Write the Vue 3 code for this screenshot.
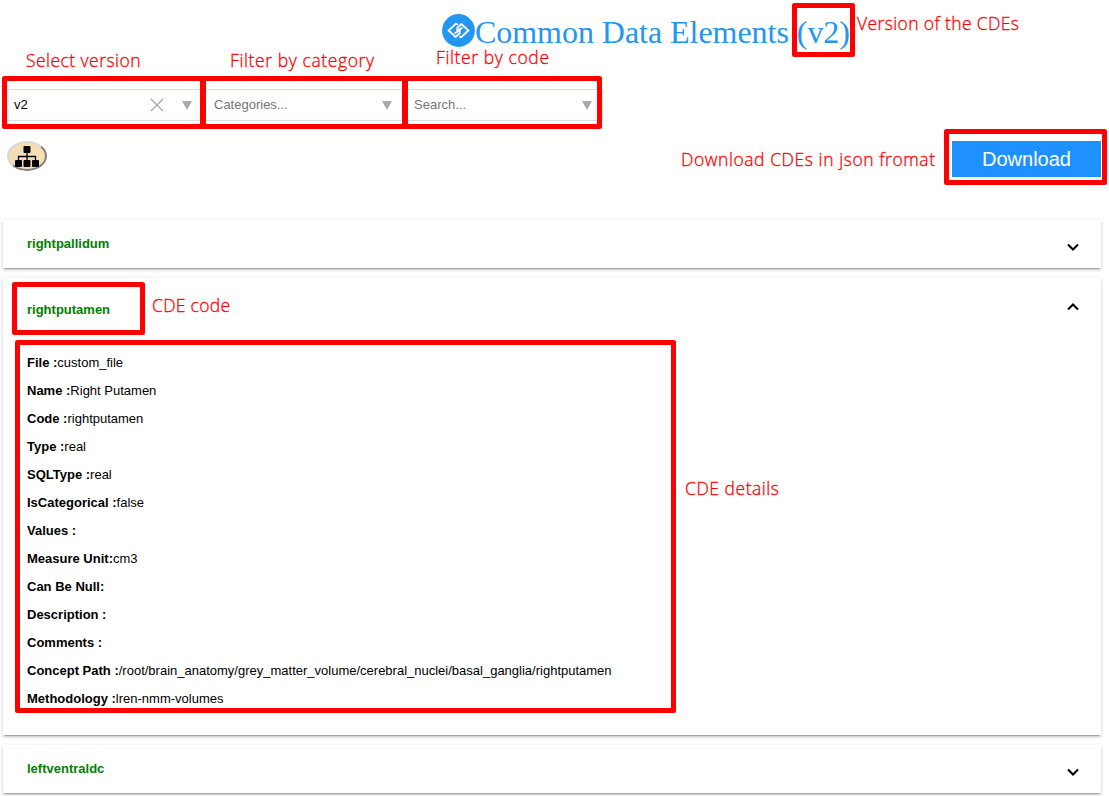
<script setup>
const filters = [
  { text: 'v2', filled: true },
  { text: 'Categories...', filled: false },
  { text: 'Search...', filled: false },
]

const details = [
  ['File :', 'custom_file'],
  ['Name :', 'Right Putamen'],
  ['Code :', 'rightputamen'],
  ['Type :', 'real'],
  ['SQLType :', 'real'],
  ['IsCategorical :', 'false'],
  ['Values :', ''],
  ['Measure Unit:', 'cm3'],
  ['Can Be Null:', ''],
  ['Description :', ''],
  ['Comments :', ''],
  ['Concept Path :', '/root/brain_anatomy/grey_matter_volume/cerebral_nuclei/basal_ganglia/rightputamen'],
  ['Methodology :', 'lren-nmm-volumes'],
]

const panels = [
  { code: 'rightpallidum', open: false },
  { code: 'rightputamen', open: true },
  { code: 'leftventraldc', open: false },
]

// Outer edges of each highlight frame
const frames = [
  { x: 2, y: 76, w: 204, h: 53 },
  { x: 200, y: 76, w: 208, h: 53 },
  { x: 402, y: 76, w: 200, h: 53 },
  { x: 792, y: 3, w: 63, h: 54 },
  { x: 944, y: 129, w: 163, h: 56 },
  { x: 12, y: 282, w: 133, h: 53 },
  { x: 15, y: 340, w: 661, h: 373 },
]

const notes = [
  { text: 'Select version', x: 26, y: 67, w: 114.5 },
  { text: 'Filter by category', x: 230, y: 67, w: 144 },
  { text: 'Filter by code', x: 436, y: 64, w: 113 },
  { text: 'Version of the CDEs', x: 857, y: 30, w: 162 },
  { text: 'Download CDEs in json fromat', x: 681, y: 166, w: 254 },
  { text: 'CDE code', x: 152, y: 312, w: 78 },
  { text: 'CDE details', x: 685, y: 495, w: 94 },
]
</script>

<template>
  <main class="page">
    <header class="title">
      <svg class="logo" viewBox="0 0 32 32" width="33" height="33">
        <circle cx="16" cy="16" r="15.9" fill="#2196f3" />
        <g fill="none" stroke="#fff" stroke-width="1.8">
          <path d="M15.4 10.2 L13.4 9.6 L6.4 16 L13.2 22.2 L17.2 18.6 V15.4 L12.2 19" />
          <path d="M16.6 21.8 L18.6 22.4 L25.6 16 L18.8 9.8 L14.8 13.4 V16.6 L19.8 13" />
        </g>
      </svg>
      <h1>Common Data Elements (v2)</h1>
    </header>

    <section class="filters">
      <div v-for="f in filters" :key="f.text" class="select" :class="{ filled: f.filled }">
        <span class="value">{{ f.text }}</span>
        <svg v-if="f.filled" class="clear" width="14" height="14" viewBox="0 0 14 14">
          <path d="M1 1 L13 13 M13 1 L1 13" stroke="#aaa" stroke-width="1.4" />
        </svg>
        <svg class="arrow" width="10" height="9" viewBox="0 0 10 9">
          <path d="M0 0 H10 L5 9 Z" fill="#aaa" />
        </svg>
      </div>
    </section>

    <section class="actions">
      <button class="tree" type="button" aria-label="Tree view">
        <svg width="24" height="21" viewBox="0 0 24 21">
          <rect x="8.5" y="0" width="7" height="7" rx="1" />
          <rect x="0" y="14" width="7" height="7" rx="1" />
          <rect x="8.5" y="14" width="7" height="7" rx="1" />
          <rect x="17" y="14" width="7" height="7" rx="1" />
          <path d="M12 6 V15 M3.5 15 V10.5 H20.5 V15" fill="none" stroke="#000" stroke-width="1.3" />
        </svg>
      </button>
      <button class="download" type="button">Download</button>
    </section>

    <section class="panels">
      <article v-for="p in panels" :key="p.code" class="panel" :class="{ open: p.open }">
        <div class="head">
          <b>{{ p.code }}</b>
          <svg class="chevron" width="12" height="8" viewBox="0 0 12 8">
            <path :d="p.open ? 'M1 6.5 L6 1.5 L11 6.5' : 'M1 1.5 L6 6.5 L11 1.5'" fill="none" stroke="#000" stroke-width="2" />
          </svg>
        </div>
        <div v-if="p.open" class="body">
          <p v-for="d in details" :key="d[0]"><b>{{ d[0] }}</b>{{ d[1] }}</p>
        </div>
      </article>
    </section>

    <svg class="annotations" width="1109" height="796" viewBox="0 0 1109 796">
      <rect
        v-for="(f, i) in frames"
        :key="i"
        :x="f.x + 2.5"
        :y="f.y + 2.5"
        :width="f.w - 5"
        :height="f.h - 5"
      />
      <text v-for="n in notes" :key="n.text" :x="n.x" :y="n.y" :textLength="n.w">{{ n.text }}</text>
    </svg>
  </main>
</template>

<style>
body {
  background: #fff;
  overflow: hidden;
}
</style>

<style scoped>
.page {
  position: relative;
  box-sizing: border-box;
  width: 1109px;
  height: 796px;
  padding: 0 8px 0 3px;
  overflow: hidden;
  font-family: "Liberation Sans", Arial, sans-serif;
  font-size: 13px;
  color: #000;
}
.title {
  display: flex;
  align-items: center;
  height: 61px;
  padding-left: 439px;
  color: #2196f3;
}
.title h1 {
  margin: 3px 0 0;
  font: 400 32px/32px "Liberation Serif", "Times New Roman", serif;
  letter-spacing: -0.04px;
  white-space: nowrap;
}
.logo {
  flex: none;
}
.filters {
  display: flex;
  margin-top: 28px;
}
.select {
  display: flex;
  align-items: center;
  box-sizing: border-box;
  width: 200px;
  height: 32px;
  padding: 0 11px;
  border: 1px solid #ddd;
  border-left: 0;
  color: #757575;
}
.select.filled {
  color: #000;
}
.value {
  flex: 1;
  line-height: 16px;
}
.clear {
  margin-right: 18px;
}
.arrow {
  margin-top: 1px;
  margin-right: -1px;
}
.actions {
  display: flex;
  justify-content: space-between;
  align-items: flex-start;
  margin-top: 20px;
  padding-left: 4px;
}
.tree {
  display: flex;
  align-items: center;
  justify-content: center;
  width: 40px;
  height: 30px;
  padding: 0;
  border: 2px solid;
  border-color: #d8d8d8 #808080 #808080 #d8d8d8;
  border-radius: 50%;
  background: wheat;
}
.download {
  width: 149px;
  height: 36px;
  padding: 0;
  border: 0;
  background: #1e90ff;
  color: #fff;
  font: 20px/36px "Liberation Sans", Arial, sans-serif;
}
.panels {
  display: flex;
  flex-direction: column;
  gap: 10px;
  margin-top: 43px;
}
.panel {
  height: 48px;
  background: #fff;
  box-shadow: 0 3px 1px -2px rgba(0, 0, 0, 0.2), 0 2px 2px 0 rgba(0, 0, 0, 0.14),
    0 1px 5px 0 rgba(0, 0, 0, 0.12);
}
.panel.open {
  height: 457px;
}
.head {
  display: flex;
  align-items: center;
  justify-content: space-between;
  height: 48px;
  padding: 0 22px 0 24px;
  color: green;
}
.head b {
  margin-bottom: 2px;
}
.open .head {
  height: 64px;
}
.chevron {
  margin-top: 6px;
}
.open .chevron {
  margin-top: -6px;
}
.body {
  padding: 7px 24px 0;
}
.body p {
  margin: 0;
  line-height: 28px;
  white-space: nowrap;
}
.annotations {
  position: absolute;
  left: 0;
  top: 0;
  pointer-events: none;
}
.annotations rect {
  fill: none;
  stroke: #f00;
  stroke-width: 5px;
  stroke-linejoin: round;
}
.annotations text {
  fill: #f00;
  stroke: #f00;
  stroke-width: 0.3px;
  font-family: "Open Sans", "Noto Sans", sans-serif;
  font-size: 17.5px;
  font-weight: 300;
}
</style>
